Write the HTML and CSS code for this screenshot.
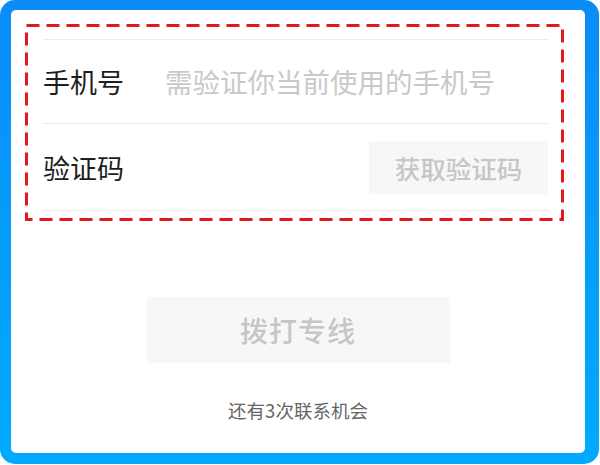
FILE: index.html
```html
<!DOCTYPE html>
<html lang="zh-CN">
<head>
<meta charset="utf-8">
<title>拨打专线</title>
<link rel="stylesheet" href="styles.css">
</head>
<body>
<div class="frame">
  <div class="card">
    <svg class="dash-box" width="539" height="197" viewBox="0 0 539 197" aria-hidden="true">
      <rect x="1.5" y="1.5" width="536" height="194" fill="none" stroke="#e01b1f" stroke-width="3" stroke-dasharray="13 7"/>
    </svg>
    <div class="form">
      <div class="row row-phone">
        <span class="label">手机号</span>
        <span class="placeholder">需验证你当前使用的手机号</span>
      </div>
      <div class="row row-code">
        <span class="label">验证码</span>
        <span class="code-btn">获取验证码</span>
      </div>
    </div>
    <div class="dial-wrap">
      <div class="dial-btn">拨打专线</div>
    </div>
    <p class="remain">还有3次联系机会</p>
  </div>
</div>
</body>
</html>
```

FILE: styles.css
```css
html, body {
  margin: 0;
  padding: 0;
  background: #ffffff;
}
body {
  font-family: "Noto Sans CJK SC", "Noto Sans", sans-serif;
}
.frame {
  width: 599px;
  height: 464px;
  box-sizing: border-box;
  padding: 10px 14px 11px 11px;
  border-radius: 15px;
  background: linear-gradient(to bottom, #0b8cf6 0%, #049cfb 50%, #00aaff 100%);
}
.card {
  position: relative;
  height: 100%;
  box-sizing: border-box;
  background: #ffffff;
  border-radius: 5px;
  padding-top: 29px;
}
.dash-box {
  position: absolute;
  left: 14px;
  top: 14px;
  display: block;
}
.form {
  margin: 0 37px 0 32px;
}
.row {
  display: flex;
  align-items: center;
  border-top: 1px solid #ececec;
}
.row-phone {
  height: 83px;
}
.row-code {
  height: 86px;
  border-bottom: 1px solid #ececec;
  justify-content: space-between;
}
.label {
  width: 122px;
  font-size: 27px;
  color: #1e1e1e;
  line-height: 1;
}
.placeholder {
  font-size: 27.5px;
  color: #c9c9c9;
  line-height: 1;
  white-space: nowrap;
}
.code-btn {
  width: 179px;
  height: 53px;
  display: flex;
  align-items: center;
  justify-content: center;
  background: #f7f7f7;
  color: #c6c6c6;
  font-size: 25.5px;
  font-weight: 500;
}
.dial-wrap {
  display: flex;
  justify-content: center;
  margin-top: 86px;
}
.dial-btn {
  width: 303px;
  height: 66px;
  display: flex;
  align-items: center;
  justify-content: center;
  background: #f7f7f7;
  color: #c6c6c6;
  font-size: 28px;
  font-weight: 500;
  letter-spacing: 1px;
}
.remain {
  margin: 34px 0 0;
  text-align: center;
  font-size: 18.5px;
  line-height: 26px;
  color: #666666;
}
```
